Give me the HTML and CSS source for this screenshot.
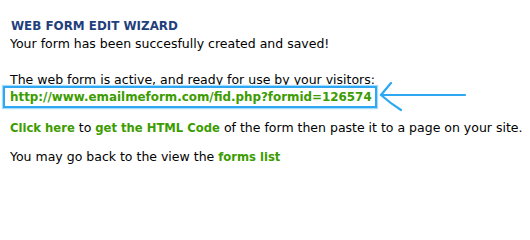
FILE: index.html
```html
<!DOCTYPE html>
<html>
<head>
<meta charset="utf-8">
<link rel="stylesheet" href="styles.css">
</head>
<body>
<div class="page">
  <h1 class="title">WEB FORM EDIT WIZARD</h1>
  <p class="line">Your form has been succesfully created and saved!</p>
  <p class="line gap">The web form is active, and ready for use by your visitors:</p>
  <div class="link-row">
    <a class="url" href="#">http://www.emailmeform.com/fid.php?formid=126574</a>
    <svg class="arrow" width="92" height="32" viewBox="0 0 92 32">
      <path d="M6 14 L88 14" />
      <path d="M14 2 Q9 8 4 14 Q13 22 24 29" />
    </svg>
  </div>
  <p class="line para"><a class="g" href="#">Click here</a> to <a class="g" href="#">get the HTML Code</a> of the form then paste it to a page on your site.</p>
  <p class="line para2">You may go back to the view the <a class="g" href="#">forms list</a></p>
</div>
</body>
</html>
```
FILE: styles.css
```css
html, body {
  margin: 0;
  padding: 0;
  background: #ffffff;
}
.page {
  padding: 17px 0 0 10px;
  font-family: "DejaVu Sans", Verdana, sans-serif;
  font-size: 12.5px;
  color: #000000;
}
.title {
  margin: 0;
  font-size: 11.9px;
  font-weight: bold;
  line-height: 18px;
  color: #1f3f7c;
  padding-left: 1px;
}
.line {
  margin: 0;
  line-height: 18px;
}
.gap {
  margin-top: 18px;
}
.link-row {
  display: flex;
  align-items: center;
  margin-left: -7px;
  margin-top: -3px;
  height: 22px;
  position: relative;
}
.url {
  display: inline-block;
  border: 2px solid #2ea8f2;
  box-shadow: 0 0 1px 1px #a8dcfb;
  padding: 0 3px 0 5px;
  line-height: 18px;
  font-size: 11.9px;
  font-weight: bold;
  color: #3c9c00;
  text-decoration: none;
}
.arrow {
  position: absolute;
  left: 374px;
  top: -5px;
}
.arrow path {
  fill: none;
  stroke: #2ea8f2;
  stroke-width: 2.2;
  stroke-linecap: round;
}
.g {
  font-size: 11.6px;
  font-weight: bold;
  color: #3c9c00;
  text-decoration: none;
}
.para {
  margin-top: 11px;
}
.para2 {
  margin-top: 11px;
}
```
